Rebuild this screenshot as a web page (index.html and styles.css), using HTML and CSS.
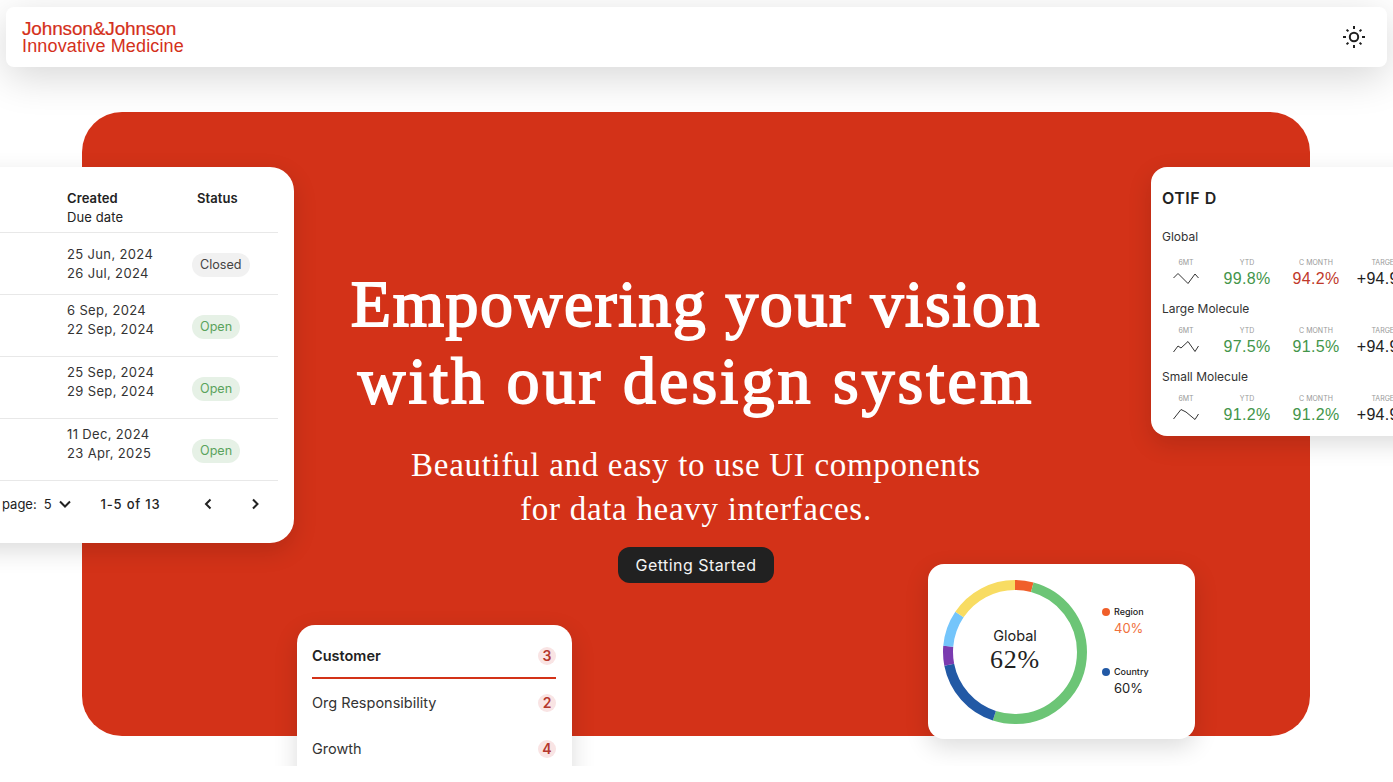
FILE: index.html
```html
<!DOCTYPE html>
<html>
<head>
	<meta charset="utf-8">
	<title>Design System</title>
	<link rel="stylesheet" href="styles.css">
</head>
<body>
	<div class="page">
		<header class="topbar">
			<div class="logo">
				<span class="logo-main">Johnson&amp;Johnson</span>
				<span class="logo-sub">Innovative Medicine</span>
			</div>
			<svg class="sun" width="24" height="24" viewBox="0 0 24 24" fill="none" stroke="#1f1f1f" stroke-width="2">
				<circle cx="12" cy="12" r="4.2"/>
				<path d="M12 1v3M12 20v3M1 12h3M20 12h3M4.600 4.600l1.800 1.800M17.600 17.600l1.800 1.800M4.600 19.400l1.800-1.800M17.600 6.400l1.800-1.800"/>
			</svg>
		</header>

		<section class="hero">
			<h1><span class="h-one">Empowering your vision</span><span class="h-two">with our design system</span></h1>
			<p class="lead">Beautiful and easy to use UI components<br>for data heavy interfaces.</p>
			<a class="btn" href="#">Getting Started</a>
		</section>

		<!-- table card -->
		<div class="card table-card">
			<div class="t-row t-head">
				<div><b>Created</b><br>Due date</div>
				<div><b>Status</b></div>
			</div>
			<div class="t-row">
				<div>25 Jun, 2024<br>26 Jul, 2024</div>
				<div class="pill-cell"><span class="pill closed">Closed</span></div>
			</div>
			<div class="t-row">
				<div class="dates">6 Sep, 2024<br>22 Sep, 2024</div>
				<div class="pill-cell"><span class="pill open">Open</span></div>
			</div>
			<div class="t-row">
				<div class="dates">25 Sep, 2024<br>29 Sep, 2024</div>
				<div class="pill-cell"><span class="pill open">Open</span></div>
			</div>
			<div class="t-row">
				<div class="dates">11 Dec, 2024<br>23 Apr, 2025</div>
				<div class="pill-cell"><span class="pill open">Open</span></div>
			</div>
			<div class="t-foot">
				<span class="per-page">page:</span>
				<span class="per-num">5</span>
				<svg class="chev-down" width="14" height="14" viewBox="0 0 14 14" fill="none" stroke="#222" stroke-width="2"><path d="M2 4.500l5 5 5-5"/></svg>
				<b class="range">1-5 of 13</b>
				<svg class="prev" width="14" height="14" viewBox="0 0 14 14" fill="none" stroke="#222" stroke-width="2"><path d="M9.500 2.500L5 7l4.500 4.500"/></svg>
				<svg class="next" width="14" height="14" viewBox="0 0 14 14" fill="none" stroke="#222" stroke-width="2"><path d="M5 2.500L9.500 7 5 11.500"/></svg>
			</div>
		</div>

		<!-- otif card -->
		<div class="card otif">
			<h3>OTIF D</h3>
			<div class="otif-name otif-first">Global</div>
			<div class="otif-grid">
				<span class="cap">6MT</span><span class="cap">YTD</span><span class="cap">C MONTH</span><span class="cap">TARGET</span>
				<svg class="spark" width="26" height="14" viewBox="0 0 26 14" fill="none" stroke="#333"><polyline points="0.500,6 5,1.500 15,11.500 22,2 25.500,6"/></svg>
				<span class="val good">99.8%</span><span class="val bad">94.2%</span><span class="val">+94.9%</span>
			</div>
			<div class="otif-name">Large Molecule</div>
			<div class="otif-grid">
				<span class="cap">6MT</span><span class="cap">YTD</span><span class="cap">C MONTH</span><span class="cap">TARGET</span>
				<svg class="spark" width="26" height="14" viewBox="0 0 26 14" fill="none" stroke="#333"><polyline points="0.500,12 5,6 8,8 15,1.500 22,11.500 25.500,6"/></svg>
				<span class="val good">97.5%</span><span class="val good">91.5%</span><span class="val">+94.9%</span>
			</div>
			<div class="otif-name">Small Molecule</div>
			<div class="otif-grid">
				<span class="cap">6MT</span><span class="cap">YTD</span><span class="cap">C MONTH</span><span class="cap">TARGET</span>
				<svg class="spark" width="26" height="14" viewBox="0 0 26 14" fill="none" stroke="#333"><polyline points="0.500,11 8,1.500 13,4 22,11.500 25.500,6"/></svg>
				<span class="val good">91.2%</span><span class="val good">91.2%</span><span class="val">+94.9%</span>
			</div>
		</div>

		<!-- donut card -->
		<div class="card donut-card">
			<div class="donut">
				<svg width="144" height="144" viewBox="0 0 144 144" fill="none" stroke-width="10">
					<g transform="rotate(-90 72 72)">
						<circle cx="72" cy="72" r="67" pathLength="360" stroke="#f05f2a" stroke-dasharray="15 345"/>
						<circle cx="72" cy="72" r="67" pathLength="360" stroke="#6cc576" stroke-dasharray="183 177" stroke-dashoffset="-15"/>
						<circle cx="72" cy="72" r="67" pathLength="360" stroke="#2259a5" stroke-dasharray="61 299" stroke-dashoffset="-198"/>
						<circle cx="72" cy="72" r="67" pathLength="360" stroke="#7a3bb0" stroke-dasharray="16 344" stroke-dashoffset="-259"/>
						<circle cx="72" cy="72" r="67" pathLength="360" stroke="#74c5fb" stroke-dasharray="29 331" stroke-dashoffset="-275"/>
						<circle cx="72" cy="72" r="67" pathLength="360" stroke="#f8dc62" stroke-dasharray="56 304" stroke-dashoffset="-304"/>
					</g>
				</svg>
				<div class="donut-label">
					<span>Global</span>
					<strong>62%</strong>
				</div>
			</div>
			<div class="legend">
				<div class="legend-item">
					<div class="legend-name"><i class="dot orange"></i>Region</div>
					<div class="legend-val orange-text">40%</div>
				</div>
				<div class="legend-item">
					<div class="legend-name"><i class="dot blue"></i>Country</div>
					<div class="legend-val">60%</div>
				</div>
			</div>
		</div>

		<!-- tabs card -->
		<div class="card tabs">
			<div class="tab active"><span>Customer</span><em>3</em></div>
			<div class="tab"><span>Org Responsibility</span><em>2</em></div>
			<div class="tab"><span>Growth</span><em>4</em></div>
		</div>
	</div>
</body>
</html>
```

FILE: styles.css
```css
* {
	margin: 0;
	padding: 0;
	box-sizing: border-box;
}
html, body {
	background: #fff;
	overflow: hidden;
}
body {
	font: 14px/1.4 Inter, "Liberation Sans", sans-serif;
	color: #222;
}
.page {
	position: relative;
	height: 766px;
	overflow: hidden;
	padding: 7px 6px 0;
}

/* top bar */
.topbar {
	height: 60px;
	background: #fff;
	border-radius: 8px;
	box-shadow: 0 10px 40px rgba(0, 0, 0, .16);
	display: flex;
	align-items: center;
	justify-content: space-between;
	padding: 0 21px 0 16px;
	position: relative;
}
.logo {
	display: flex;
	flex-direction: column;
	padding-top: 1px;
	color: #d4301a;
	font-family: "Liberation Sans", sans-serif;
	line-height: 17px;
}
.logo-main {
	font-size: 19px;
	letter-spacing: -.15px;
	margin-bottom: 1px;
	-webkit-text-stroke: .2px #d4301a;
}
.logo-sub {
	font-size: 18px;
	letter-spacing: .15px;
}

/* red hero */
.hero {
	margin: 45px 77px 0 76px;
	height: 624px;
	background: #d33218;
	border-radius: 40px;
	color: #fff;
	display: flex;
	flex-direction: column;
	align-items: center;
	padding-top: 153px;
	text-align: center;
}
h1 {
	font: 400 66px/77px "Liberation Serif", serif;
	-webkit-text-stroke: 1.8px #fff;
}
h1 span {
	display: block;
	white-space: nowrap;
}
.h-one {
	letter-spacing: 1.55px;
}
.h-two {
	letter-spacing: 3px;
}
.lead {
	font: 33px/44px "Liberation Serif", serif;
	letter-spacing: .7px;
	margin-top: 24px;
}
.btn {
	display: block;
	margin-top: 16px;
	width: 156px;
	height: 36px;
	line-height: 36px;
	border-radius: 12px;
	background: #212121;
	color: #f4f4f4;
	font-size: 16px;
	letter-spacing: .45px;
	text-decoration: none;
}

/* floating cards */
.card {
	position: absolute;
	background: #fff;
	box-shadow: 0 8px 24px rgba(0, 0, 0, .14);
}

.table-card {
	left: -40px;
	top: 167px;
	width: 334px;
	height: 376px;
	border-radius: 24px;
	padding-right: 16px;
	font-size: 13px;
}
.t-row {
	display: grid;
	grid-template-columns: 125px 93px;
	align-items: center;
	padding-left: 107px;
	height: 62px;
	line-height: 19px;
	border-bottom: 1px solid #e8e8e8;
	letter-spacing: .35px;
	color: #333;
}
.dates {
	padding-bottom: 11px;
}
.t-head {
	height: 66px;
	padding-top: 22px;
	align-items: start;
	color: #222;
	letter-spacing: .1px;
}
.t-head b {
	font-weight: 600;
}
.t-head > div:last-child {
	padding-left: 5px;
}
.pill-cell {
	padding-top: 2px;
}
.pill {
	display: inline-block;
	height: 24px;
	line-height: 24px;
	padding: 0 8px;
	border-radius: 12px;
	font-size: 12.6px;
	letter-spacing: 0;
}
.closed {
	background: #f1f1f1;
	color: #444;
}
.open {
	background: #e6f1e6;
	color: #5aa35c;
}
.t-foot {
	display: flex;
	align-items: center;
	height: 46px;
	padding-left: 42px;
	color: #222;
}
.per-num {
	margin-left: 7px;
}
.chev-down {
	margin-left: 6px;
}
.range {
	font-weight: 500;
	letter-spacing: .8px;
	margin-left: 29px;
}
.prev {
	margin-left: 40px;
}
.next {
	margin-left: 33px;
}

.otif {
	left: 1151px;
	top: 167px;
	width: 300px;
	height: 269px;
	border-radius: 16px;
	padding: 20px 11px;
}
.otif h3 {
	font-size: 16px;
	line-height: 22px;
	font-weight: 600;
	letter-spacing: .5px;
	margin-bottom: 20px;
}
.otif-name {
	font-size: 12px;
	line-height: 16px;
	color: #333;
}
.otif-first {
	margin-bottom: 12px;
}
.otif-grid {
	display: grid;
	grid-template-columns: 48px 74px 64px 74px;
	justify-items: center;
	align-items: center;
	margin: 8px 0 12px;
	white-space: nowrap;
}
.cap {
	font-size: 7px;
	line-height: 12px;
	color: #999;
}
.val {
	font-size: 16px;
	line-height: 20px;
	letter-spacing: .3px;
	font-family: "Liberation Sans", sans-serif;
}
.good {
	color: #43954a;
}
.bad {
	color: #c0392b;
}

.donut-card {
	left: 928px;
	top: 564px;
	width: 267px;
	height: 175px;
	border-radius: 16px;
	display: flex;
	align-items: center;
	padding-left: 15px;
}
.donut {
	position: relative;
	width: 144px;
	height: 144px;
}
.donut-label {
	position: absolute;
	inset: 0;
	display: flex;
	flex-direction: column;
	align-items: center;
	justify-content: center;
	padding-bottom: 4px;
}
.donut-label span {
	font-size: 14.5px;
	line-height: 18px;
}
.donut-label strong {
	font: 26px/26px "Liberation Serif", serif;
	letter-spacing: .8px;
	margin-top: 2px;
}
.legend {
	margin: -2px 0 0 15px;
	display: flex;
	flex-direction: column;
	gap: 28px;
}
.legend-name {
	display: flex;
	align-items: center;
	gap: 4px;
	font-size: 9px;
	line-height: 14px;
	font-weight: 500;
}
.dot {
	width: 8px;
	height: 8px;
	border-radius: 50%;
}
.orange {
	background: #f05f2a;
}
.blue {
	background: #2259a5;
}
.legend-val {
	font-size: 13px;
	line-height: 18px;
	padding-left: 12px;
}
.orange-text {
	color: #f0703c;
}

.tabs {
	left: 297px;
	top: 625px;
	width: 275px;
	height: 170px;
	border-radius: 18px;
	padding: 0 16px 0 15px;
}
.tab {
	display: flex;
	align-items: center;
	justify-content: space-between;
	height: 46px;
	padding-top: 2px;
	font-size: 14.5px;
	color: #333;
}
.tab.active {
	height: 54px;
	padding-top: 10px;
	font-weight: 600;
	color: #222;
	border-bottom: 2px solid #d33218;
}
.tab em {
	width: 18px;
	height: 18px;
	line-height: 18px;
	border-radius: 50%;
	background: #f9e4e4;
	color: #b5382e;
	font-size: 14px;
	font-style: normal;
	font-weight: 600;
	text-align: center;
}
```
